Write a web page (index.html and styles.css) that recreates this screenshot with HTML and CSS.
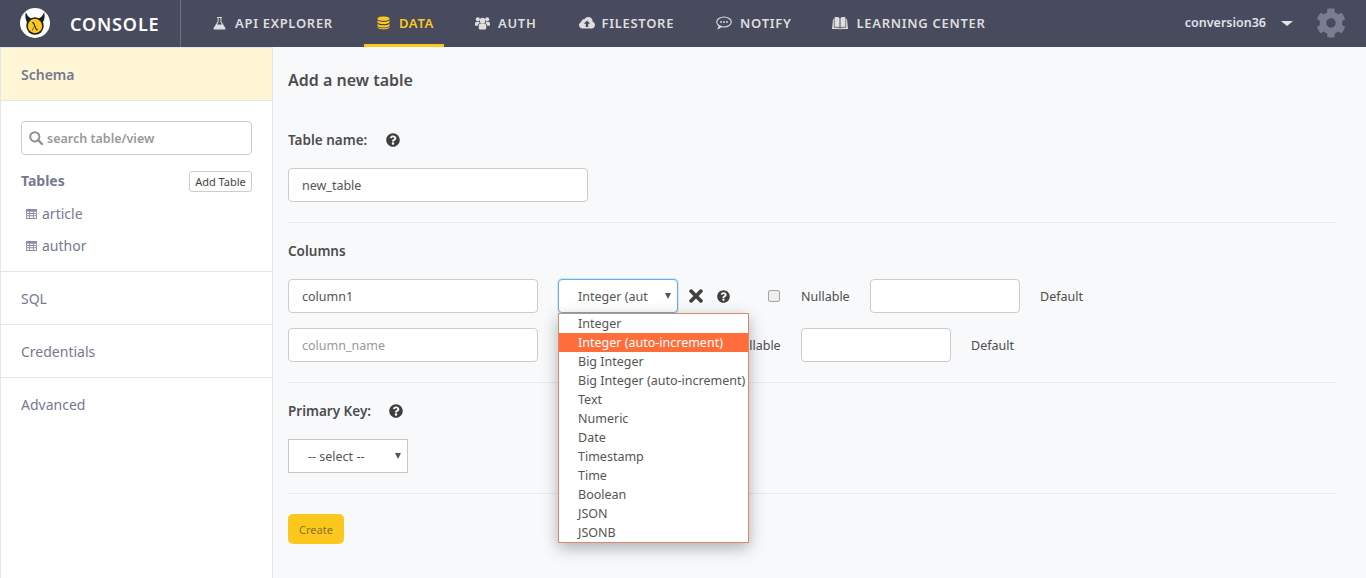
FILE: index.html
```html
<!DOCTYPE html>
<html lang="en">

<head>
  <meta charset="UTF-8">
  <title>Console</title>
  <link rel="stylesheet" href="styles.css">
</head>

<body>
  <svg class="sprites" width="0" height="0">
    <symbol id="help" viewBox="0 0 512 512">
      <path d="M504 256c0 136.997-111.043 248-248 248S8 392.997 8 256C8 119.083 119.043 8 256 8s248 111.083 248 248zM262.655 90c-54.497 0-89.255 22.957-116.549 63.758-3.536 5.286-2.353 12.415 2.715 16.258l34.699 26.31c5.205 3.947 12.621 3.008 16.665-2.122 17.864-22.658 30.113-35.797 57.303-35.797 20.429 0 45.698 13.148 45.698 32.958 0 14.976-12.363 22.667-32.534 33.976C247.128 238.528 216 254.941 216 296v4c0 6.627 5.373 12 12 12h56c6.627 0 12-5.373 12-12v-1.333c0-28.462 83.186-29.647 83.186-106.667 0-58.002-60.165-102-116.531-102zM256 338c-25.365 0-46 20.635-46 46 0 25.364 20.635 46 46 46s46-20.636 46-46c0-25.365-20.635-46-46-46z"/>
    </symbol>
    <symbol id="grid" viewBox="0 0 12 11">
      <path fill-rule="evenodd" d="M0 0h12v11H0zM1 3v1.500h2.500V3zM4.500 3v1.500h3V3zM8.500 3v1.500H11V3zM1 5.500V7h2.500V5.500zM4.500 5.500V7h3V5.500zM8.500 5.500V7H11V5.500zM1 8v2h2.500V8zM4.500 8v2h3V8zM8.500 8v2H11V8z"/>
    </symbol>
  </svg>

  <nav class="topbar">
    <a class="brand">
      <svg class="logo" viewBox="0 0 30 30">
        <circle cx="15" cy="15" r="15" fill="#fff"/>
        <path d="M5.800 4c-.8 4-.5 7.500 1.500 11l4-4.500C9 9.500 7 7.500 5.800 4zM24.200 4c.8 4 .5 7.500-1.500 11l-4-4.500C21 9.500 23 7.500 24.200 4z" fill="#1d1d1d"/>
        <circle cx="15" cy="18" r="8.700" fill="#1d1d1d"/>
        <circle cx="15" cy="18" r="7.200" fill="#fdc81e"/>
        <path d="M11.800 22.500l2.500-4.300-1.300-3h-1v-1h1.800l3 7h1v1h-1.700l-1.600-3.600-2 3.900z" fill="#1d1d1d"/>
      </svg>
      <span class="brand__name">CONSOLE</span>
    </a>
    <ul class="topnav">
      <li class="topnav__item">
        <svg class="topnav__icon" viewBox="0 0 14 14">
          <path d="M4.500 .5h5v1H9v4l4.300 6.800c.4.700 0 1.700-1 1.700H1.700c-1 0-1.400-1-1-1.700L5 5.500v-4h-.5zM6 1.500v4.300L4.300 8.500h5.400L8 5.800V1.500z" fill-rule="evenodd"/>
        </svg>
        API EXPLORER
      </li>
      <li class="topnav__item topnav__item--active">
        <svg class="topnav__icon" viewBox="0 0 14 14"><path d="M7 0c3.500 0 6.500 1 6.500 2.300S10.500 4.600 7 4.600.5 3.600.5 2.300 3.500 0 7 0zM.5 4c1 1.200 3.500 1.800 6.500 1.800S12.500 5.200 13.500 4v1.900c0 1.300-3 2.300-6.500 2.300S.5 7.200.5 5.900zM.5 7.700c1 1.200 3.500 1.800 6.500 1.800s5.500-.6 6.500-1.800v1.900c0 1.300-3 2.300-6.500 2.300S.5 10.900.5 9.600zM.5 11c1 1.200 3.500 1.600 6.500 1.600s5.500-.4 6.500-1.600v.7C13.500 13 10.500 14 7 14S.5 13 .5 11.700z"/></svg>
        DATA
      </li>
      <li class="topnav__item">
        <svg class="topnav__icon topnav__icon--users" viewBox="0 0 16 14"><circle cx="8" cy="4.500" r="3"/><circle cx="3" cy="3" r="2.200"/><circle cx="13" cy="3" r="2.200"/><path d="M4 12.500V10c0-1.800 1.200-2.500 2-2.500h4c.8 0 2 .7 2 2.500v2.500c0 1-1 1.500-2 1.500H6c-1 0-2-.5-2-1.500zM0 8c0-1.500.8-2.300 1.800-2.300h2.400c.2.800.6 1.300 1 1.600C3.800 7.500 3 8.700 3 10H1c-.6 0-1-.5-1-1zM16 8c0-1.500-.8-2.300-1.800-2.300h-2.400c-.2.800-.6 1.300-1 1.600 1.400.2 2.200 1.400 2.200 2.700h2c.6 0 1-.5 1-1z"/></svg>
        AUTH
      </li>
      <li class="topnav__item">
        <svg class="topnav__icon topnav__icon--wide topnav__icon--tight" viewBox="0 0 16 13"><path fill-rule="evenodd" d="M3.500 12C1.500 12 0 10.500 0 8.600c0-1.500 1-2.800 2.300-3.200C2.400 3.700 3.700 2.600 5.200 2.900 6 1.400 7.500.5 9.200.5c2.500 0 4.500 2 4.500 4.400v.4C15 5.800 16 7 16 8.500c0 1.900-1.500 3.500-3.500 3.500zM8 4L4.800 7.200h2V10.500h2.400V7.200h2z"/></svg>
        FILESTORE
      </li>
      <li class="topnav__item topnav__item--notify">
        <svg class="topnav__icon topnav__icon--wide" viewBox="0 0 16 14">
          <ellipse cx="8" cy="6" rx="7.300" ry="5" fill="none" stroke="currentColor" stroke-width="1.100"/>
          <path d="M2.500 9.500c0 1.500-.5 2.800-1.500 3.900 1.800-.2 3.300-1 4.300-2.300z"/>
          <circle cx="5" cy="6" r=".9"/><circle cx="8" cy="6" r=".9"/><circle cx="11" cy="6" r=".9"/>
        </svg>
        NOTIFY
      </li>
      <li class="topnav__item">
        <svg class="topnav__icon topnav__icon--wide" viewBox="0 0 16 14"><path d="M2.500 1.500C4.500.8 6.500 1 7.500 2v9.500C6.500 10.700 4.500 10.500 2.500 11zM8.500 2c1-1 3-1.200 5-.5V11c-2-.5-4-.3-5 .5zM1 3h.8v8.800c2-.5 4.500-.3 6.200.7 1.700-1 4.200-1.200 6.200-.7V3h.8l1 10H9.500c-.3.500-2.700.5-3 0H0z"/></svg>
        LEARNING CENTER
      </li>
    </ul>
    <div class="account">
      <span class="account__name">conversion36</span>
      <span class="account__caret"></span>
      <svg class="account__gear" viewBox="0 0 512 512"><path d="M487.4 315.7l-42.6-24.6c4.3-23.2 4.3-47 0-70.200l42.6-24.600c4.900-2.800 7.100-8.600 5.500-14-11.100-35.600-30-67.800-54.700-94.600-3.800-4.100-10-5.100-14.800-2.300L380.800 110c-17.900-15.400-38.500-27.300-60.800-35.100V25.800c0-5.600-3.900-10.500-9.400-11.700-36.700-8.200-74.300-7.800-109.200 0-5.500 1.200-9.400 6.100-9.400 11.700V75c-22.200 7.900-42.800 19.800-60.800 35.100L88.700 85.500c-4.900-2.800-11-1.900-14.800 2.300-24.700 26.700-43.600 58.900-54.700 94.600-1.700 5.400.6 11.200 5.500 14L67.300 221c-4.300 23.200-4.300 47 0 70.200l-42.600 24.600c-4.900 2.800-7.100 8.600-5.500 14 11.100 35.600 30 67.800 54.700 94.600 3.800 4.100 10 5.100 14.800 2.300l42.600-24.600c17.900 15.400 38.500 27.300 60.800 35.100v49.200c0 5.600 3.900 10.500 9.400 11.700 36.700 8.200 74.300 7.800 109.200 0 5.500-1.200 9.400-6.100 9.400-11.700v-49.200c22.200-7.900 42.800-19.800 60.800-35.100l42.600 24.600c4.900 2.800 11 1.900 14.800-2.300 24.700-26.700 43.600-58.900 54.700-94.600 1.500-5.500-.7-11.300-5.600-14.100zM256 336c-44.100 0-80-35.900-80-80s35.900-80 80-80 80 35.900 80 80-35.900 80-80 80z"/></svg>
    </div>
  </nav>

  <div class="page">
    <aside class="sidebar">
      <div class="sidebar__head">Schema</div>
      <div class="sidebar__body">
        <div class="search">
          <svg class="search__icon" viewBox="0 0 14 14"><circle cx="5.800" cy="5.800" r="4.600" fill="none" stroke="currentColor" stroke-width="2"/><path d="M9 9l4 4" stroke="currentColor" stroke-width="2.400" stroke-linecap="round"/></svg>
          <input class="search__input" type="text" placeholder="search table/view">
        </div>
        <div class="tables-head">
          <b>Tables</b>
          <button class="btn-small">Add Table</button>
        </div>
        <ul class="table-list">
          <li><svg class="table-list__icon"><use href="#grid"/></svg>article</li>
          <li><svg class="table-list__icon"><use href="#grid"/></svg>author</li>
        </ul>
      </div>
      <div class="sidebar__link">SQL</div>
      <div class="sidebar__link">Credentials</div>
      <div class="sidebar__link sidebar__link--last">Advanced</div>
    </aside>

    <main class="content">
      <h1 class="title">Add a new table</h1>

      <div class="field-label field-label--name">Table name: <svg class="help"><use href="#help"/></svg></div>
      <input class="input input--table" type="text" value="new_table">
      <hr class="rule">

      <div class="field-label">Columns</div>
      <div class="column-row">
        <input class="input input--column" type="text" value="column1">
        <div class="type-wrap">
          <select class="select select--focus">
            <option>Integer (auto-increment)</option>
          </select>
          <ul class="dropdown">
            <li>Integer</li>
            <li class="dropdown__item--hover">Integer (auto-increment)</li>
            <li>Big Integer</li>
            <li>Big Integer (auto-increment)</li>
            <li>Text</li>
            <li>Numeric</li>
            <li>Date</li>
            <li>Timestamp</li>
            <li>Time</li>
            <li>Boolean</li>
            <li>JSON</li>
            <li>JSONB</li>
          </ul>
        </div>
        <svg class="remove" viewBox="0 0 352 512"><path d="M242.72 256l100.07-100.07c12.28-12.28 12.28-32.19 0-44.48l-22.24-22.24c-12.28-12.28-32.19-12.28-44.48 0L176 189.28 75.93 89.21c-12.28-12.28-32.19-12.28-44.48 0L9.21 111.45c-12.28 12.28-12.28 32.19 0 44.48L109.28 256 9.21 356.07c-12.28 12.28-12.28 32.19 0 44.48l22.24 22.24c12.28 12.28 32.2 12.28 44.48 0L176 322.72l100.07 100.07c12.28 12.28 32.2 12.28 44.48 0l22.24-22.24c12.28-12.28 12.28-32.19 0-44.48L242.72 256z"/></svg>
        <svg class="help help--row"><use href="#help"/></svg>
        <input class="check" type="checkbox">
        <span class="nullable">Nullable</span>
        <input class="input input--default" type="text">
        <span class="default-label">Default</span>
      </div>
      <div class="column-row column-row--new">
        <input class="input input--column" type="text" placeholder="column_name">
        <div class="type-wrap">
          <select class="select">
            <option>-- type --</option>
          </select>
        </div>
        <input class="check" type="checkbox">
        <span class="nullable">Nullable</span>
        <input class="input input--default" type="text">
        <span class="default-label">Default</span>
      </div>
      <hr class="rule">

      <div class="field-label">Primary Key: <svg class="help"><use href="#help"/></svg></div>
      <select class="select select--square">
        <option>-- select --</option>
      </select>
      <hr class="rule">

      <button class="btn-create">Create</button>
    </main>
  </div>
</body>

</html>
```
FILE: styles.css
```css
* {
  margin: 0;
  padding: 0;
  box-sizing: border-box;
}

html,
body {
  height: 100%;
  overflow: hidden;
}

body {
  font-family: "Noto Sans", "Open Sans", sans-serif;
  font-size: 14px;
  color: #4d4d4d;
  background-color: #f8f9fb;
}

ul {
  list-style: none;
}

.sprites {
  position: absolute;
}

/* top bar */
.topbar {
  display: flex;
  align-items: stretch;
  height: 47px;
  background-color: #484b5e;
}

.brand {
  display: flex;
  align-items: center;
  width: 181px;
  padding-left: 20px;
  border-right: 1px solid #6d7085;
}

.logo {
  width: 30px;
  height: 30px;
  margin-top: -1px;
}

.brand__name {
  margin-left: 20px;
  font-size: 18px;
  font-weight: 600;
  letter-spacing: .85px;
  color: #fff;
}

.topnav {
  display: flex;
  padding-left: 32px;
}

.topnav__item {
  display: flex;
  align-items: center;
  height: 47px;
  margin-right: 42px;
  padding-bottom: 1px;
  font-size: 13px;
  font-weight: 600;
  letter-spacing: .7px;
  color: #dedede;
}

.topnav__item--active {
  margin: 0 31px 0 -11px;
  padding: 3px 10px 1px 13px;
  color: #fdc81e;
  border-bottom: 3px solid #fdc81e;
}

.topnav__item--notify {
  margin-right: 41px;
}

.topnav__icon {
  flex: none;
  width: 13px;
  height: 14px;
  margin-right: 9px;
  fill: currentColor;
}

.topnav__icon--users {
  width: 15px;
  margin-right: 8px;
}

.topnav__icon--wide {
  width: 16px;
  margin-right: 8px;
}

.topnav__icon--tight {
  margin-right: 7px;
}

.account {
  display: flex;
  align-items: center;
  margin-left: auto;
  padding: 0 20px 3px 0;
}

.account__name {
  font-size: 12.5px;
  font-weight: 600;
  color: #dfe3ea;
}

.account__caret {
  width: 0;
  height: 0;
  margin: 3px 0 0 15px;
  border-left: 6px solid transparent;
  border-right: 6px solid transparent;
  border-top: 5px solid #e4e4e4;
}

.account__gear {
  width: 30px;
  height: 30px;
  margin: 1px 0 0 23px;
  fill: #7a7d90;
}

/* layout */
.page {
  display: flex;
  height: 531px;
}

.sidebar {
  flex: 0 0 273px;
  background-color: #fff;
  border-left: 1px solid #e6e6e6;
  border-right: 1px solid #e6e6e6;
}

.sidebar__head {
  display: flex;
  align-items: center;
  height: 54px;
  padding-left: 20px;
  font-size: 14px;
  font-weight: 600;
  color: #767991;
  background-color: #fff6d5;
  border-top: 1px solid #e6e6e6;
  border-bottom: 1px solid #e6e6e6;
}

.sidebar__body {
  height: 171px;
  padding: 20px 20px 0;
  border-bottom: 1px solid #e6e6e6;
}

.search {
  position: relative;
}

.search__icon {
  position: absolute;
  top: 10px;
  left: 8px;
  width: 14px;
  height: 14px;
  color: #8f8f8f;
}

.search__input {
  width: 231px;
  height: 34px;
  padding-left: 25px;
  font-family: inherit;
  font-size: 12.5px;
  font-weight: 600;
  background-color: #fff;
  border: 1px solid #ccc;
  border-radius: 4px;
}

.search__input::placeholder {
  color: #999;
}

.tables-head {
  display: flex;
  align-items: center;
  justify-content: space-between;
  height: 21px;
  margin-top: 16px;
  padding-bottom: 2px;
  color: #767991;
}

.btn-small {
  width: 63px;
  height: 21px;
  margin-bottom: -2px;
  font-family: inherit;
  font-size: 11px;
  color: #444;
  background-color: #fff;
  border: 1px solid #ccc;
  border-radius: 3px;
}

.table-list {
  margin-top: 6px;
  padding-left: 5px;
  color: #767991;
}

.table-list li {
  display: flex;
  align-items: center;
  height: 32px;
  padding-bottom: 2px;
}

.table-list__icon {
  width: 11px;
  height: 10px;
  margin: 2px 5px 0 0;
  fill: #8a8da5;
}

.sidebar__link {
  display: flex;
  align-items: center;
  height: 53px;
  padding-left: 20px;
  color: #767991;
  border-bottom: 1px solid #e6e6e6;
}

.sidebar__link--last {
  border-bottom: 0;
}

.content {
  flex: 1;
  padding: 0 30px 0 15px;
}

.title {
  margin-top: 22px;
  font-size: 16px;
  line-height: 22px;
  font-weight: 600;
}

.field-label {
  display: flex;
  align-items: center;
  margin-top: 18px;
  font-size: 13.5px;
  line-height: 20px;
  font-weight: 600;
}

.field-label--name {
  margin-top: 39px;
}

.help {
  width: 14px;
  height: 14px;
  margin-left: 18px;
  fill: #3f3f3f;
}

.field-label--name .help {
  margin-left: 19px;
}

.help--row {
  flex: none;
  width: 13px;
  height: 13px;
  margin-left: 14px;
}

.input {
  height: 34px;
  padding: 0 13px;
  font-family: inherit;
  font-size: 12.5px;
  color: #555;
  background-color: #fff;
  border: 1px solid #ccc;
  border-radius: 4px;
}

.input::placeholder {
  color: #999;
}

.input--table {
  display: block;
  width: 300px;
  margin-top: 18px;
}

.input--column {
  flex: none;
  width: 250px;
}

.input--default {
  flex: none;
  width: 150px;
  margin-left: 19px;
}

.rule {
  margin-top: 20px;
  border: 0;
  border-top: 1px solid #e9e9ee;
}

.column-row {
  display: flex;
  align-items: center;
  height: 34px;
  margin-top: 18px;
}

.column-row--new {
  margin-top: 15px;
}

.type-wrap {
  position: relative;
  flex: none;
  width: 120px;
  margin-left: 20px;
}

.column-row--new .check {
  margin-left: 21px;
}

.select {
  display: block;
  width: 120px;
  height: 34px;
  padding: 0 29px 0 19px;
  appearance: none;
  font-family: inherit;
  font-size: 12.5px;
  color: #555;
  background-color: #fff;
  background-image: url("data:image/svg+xml,%3Csvg xmlns='http://www.w3.org/2000/svg' width='6' height='6'%3E%3Cpath d='M0 0h6L3 6z' fill='%23555'/%3E%3C/svg%3E");
  background-repeat: no-repeat;
  background-position: right 6px center;
  background-size: 6px 6px;
  border: 1px solid #ccc;
  border-radius: 4px;
}

.select--focus {
  border-color: #66afe9;
  box-shadow: 0 0 0 1px rgba(102, 175, 233, .25);
  outline: 0;
}

.select--square {
  margin-top: 18px;
  border-color: #c8c8c8;
  border-radius: 0;
}

.dropdown {
  position: absolute;
  z-index: 5;
  top: 34px;
  left: 0;
  width: 191px;
  height: 230px;
  font-size: 12.5px;
  color: #555;
  background-color: #fff;
  border: 1px solid #d98a6d;
  box-shadow: 0 5px 15px rgba(0, 0, 0, .3);
}

.dropdown li {
  height: 19px;
  padding-left: 19px;
  line-height: 20px;
  white-space: nowrap;
}

.dropdown .dropdown__item--hover {
  color: #fff;
  background-color: #ff6d3a;
}

.remove {
  flex: none;
  width: 14px;
  height: 20px;
  margin-left: 11px;
  fill: #3f3f3f;
}

.check {
  flex: none;
  width: 12px;
  height: 12px;
  margin-left: 38px;
  appearance: none;
  background-color: #eee;
  border: 1px solid #a5a5a5;
  border-radius: 2px;
}

.nullable {
  flex: none;
  width: 50px;
  margin-left: 21px;
  font-size: 12.5px;
}

.default-label {
  margin-left: 20px;
  font-size: 12.5px;
}

.btn-create {
  display: block;
  width: 56px;
  height: 30px;
  margin-top: 20px;
  font-family: inherit;
  font-size: 11px;
  color: #8a7328;
  background-color: #fdc81e;
  border: 0;
  border-radius: 5px;
}
```
